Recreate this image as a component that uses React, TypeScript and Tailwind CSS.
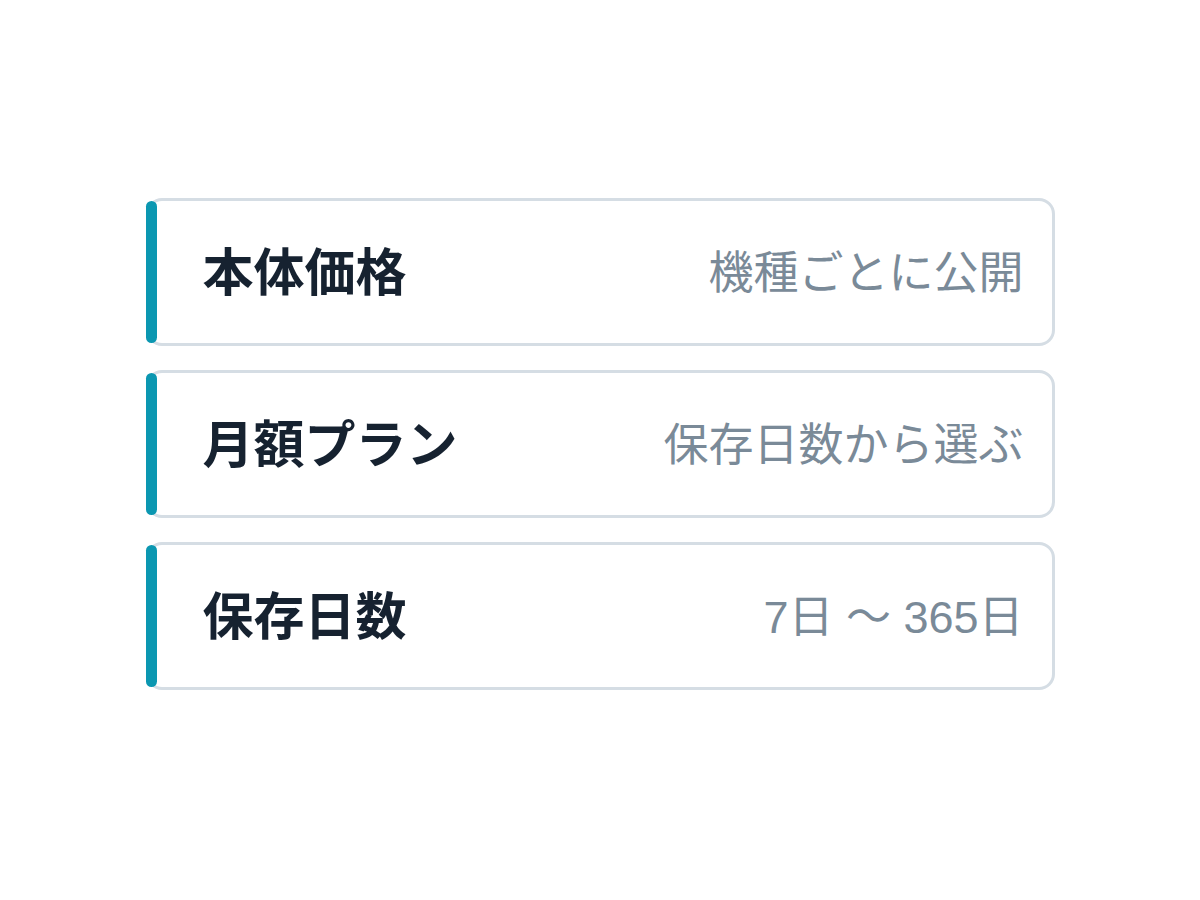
import React from 'react';

const rows = [
  { label: '本体価格', value: '機種ごとに公開' },
  { label: '月額プラン', value: '保存日数から選ぶ' },
  { label: '保存日数', value: '7日 〜 365日' },
];

const App = () => {
  return (
    <div
      className="w-[1200px] h-[900px] bg-white pt-[198px]"
      style={{ fontFamily: '"Liberation Sans", "Noto Sans CJK JP", sans-serif' }}
    >
      <div className="mx-auto w-[909px] flex flex-col gap-[24px]">
        {rows.map((row) => (
          <div
            key={row.label}
            className="relative h-[148px] rounded-[16px] border-[3px] border-[#d5dde4] bg-white flex items-center justify-between pl-[54px] pr-[28px] pt-[2px]"
          >
            <span className="absolute left-[-3px] top-[0px] bottom-[0px] w-[11px] rounded-full bg-[#0b97b1]" />
            <span className="text-[51px] font-bold text-[#162230] leading-none">{row.label}</span>
            <span className="text-[45px] text-[#7a8a98] leading-none">{row.value}</span>
          </div>
        ))}
      </div>
    </div>
  );
};

export default App;
